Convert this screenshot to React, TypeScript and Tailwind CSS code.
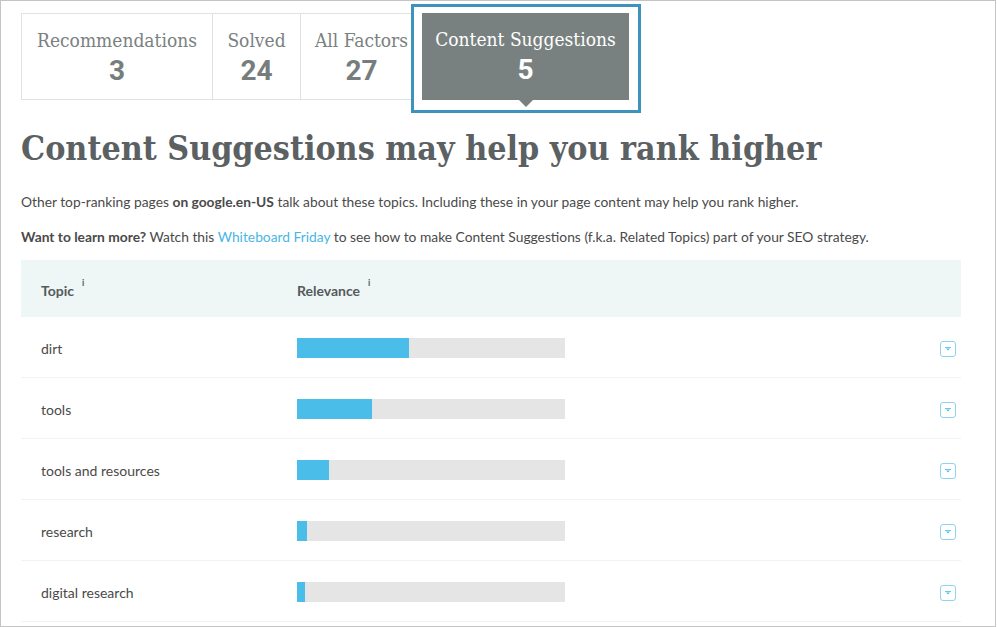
import React from "react";

const slab = { fontFamily: '"DejaVu Serif Condensed", "DejaVu Serif", serif' };
const num = { fontFamily: 'Roboto, "Liberation Sans", sans-serif' };
const lato = { fontFamily: 'Lato, "Liberation Sans", sans-serif' };

const rows = [
  { t: "dirt", w: 112 },
  { t: "tools", w: 75 },
  { t: "tools and resources", w: 32 },
  { t: "research", w: 10 },
  { t: "digital research", w: 8 },
];

function Tab({ label, n, w }: { label: string; n: string; w: number }) {
  return (
    <div
      className="h-[87px] border-y border-l border-[#dde3e3] flex flex-col items-center pt-[13px]"
      style={{ width: w }}
    >
      <div className="text-[19px] leading-[26px] text-[#7a8180] whitespace-nowrap" style={slab}>
        {label}
      </div>
      <div className="mt-[2px] text-[28px] leading-[32px] font-bold text-[#767d7c]" style={num}>
        {n}
      </div>
    </div>
  );
}

function Caret() {
  return (
    <div className="w-[16px] h-[16px] rounded-[3px] border border-[#8fd3f1] flex items-center justify-center">
      <svg width="8" height="6" viewBox="0 0 8 6">
        <rect x="1" y="1" width="6" height="1" fill="#6cc6ee" />
        <path d="M2 2.5 L6 2.5 L4 4.5 Z" fill="#4bbde9" />
      </svg>
    </div>
  );
}

export default function App() {
  return (
    <div className="w-[997px] h-[627px] bg-white overflow-hidden">
      <div className="w-[996px] h-[627px] border border-[#c4c4c4] pl-[20px] pt-[12px]">
        {/* tabs */}
        <div className="flex items-start">
          <Tab label="Recommendations" n="3" w={191} />
          <Tab label="Solved" n="24" w={88} />
          <Tab label="All Factors" n="27" w={122} />
          <div className="relative">
            <div className="absolute left-[-11px] top-[-9px] w-[230px] h-[109px] border-[3px] border-[#3d93bd] bg-white" />
            <div className="relative w-[207px] h-[87px] bg-[#798180] flex flex-col items-center pt-[13px]">
              <div className="text-[19px] leading-[26px] text-white whitespace-nowrap" style={slab}>
                Content Suggestions
              </div>
              <div className="mt-[2px] text-[28px] leading-[32px] font-bold text-white" style={num}>
                5
              </div>
              <div className="absolute left-1/2 -translate-x-1/2 top-[87px] w-0 h-0 border-l-[7px] border-r-[7px] border-t-[7px] border-l-transparent border-r-transparent border-t-[#798180]" />
            </div>
          </div>
        </div>

        {/* heading */}
        <h1
          className="mt-[28px] text-[33.7px] leading-[40px] font-bold text-[#5b6062] whitespace-nowrap"
          style={slab}
        >
          Content Suggestions may help you rank higher
        </h1>

        <div className="text-[13.8px] text-[#4a4a4a]" style={lato}>
          <p className="mt-[24px] leading-[20px]">
            Other top-ranking pages <b>on google.en-US</b> talk about these topics. Including these in your page
            content may help you rank higher.
          </p>
          <p className="mt-[15px] leading-[20px]">
            <b>Want to learn more?</b> Watch this <span className="text-[#48b6e6]">Whiteboard Friday</span> to see
            how to make Content Suggestions (f.k.a. Related Topics) part of your SEO strategy.
          </p>
        </div>

        {/* table */}
        <div className="mt-[13px] w-[940px]" style={lato}>
          <div className="h-[57px] bg-[#eef6f6] flex items-center text-[14px] font-bold text-[#555a5c]">
            <div className="w-[276px] pl-[20px] pt-[4px]">
              Topic<sup className="ml-[8px] text-[9px] font-bold align-[6px]">i</sup>
            </div>
            <div className="pt-[4px]">
              Relevance<sup className="ml-[8px] text-[9px] font-bold align-[6px]">i</sup>
            </div>
          </div>
          {rows.map((r) => (
            <div
              key={r.t}
              className="h-[61px] border-b border-[#eef3f3] flex items-center pt-[2px] text-[14px] text-[#4a4a4a]"
            >
              <div className="w-[276px] pl-[20px]">{r.t}</div>
              <div className="w-[268px] h-[20px] bg-[#e5e5e5] flex">
                <div className="h-full bg-[#4bbde9]" style={{ width: r.w }} />
              </div>
              <div className="flex-1" />
              <div className="pr-[5px] pt-[2px]">
                <Caret />
              </div>
            </div>
          ))}
        </div>
      </div>
    </div>
  );
}
